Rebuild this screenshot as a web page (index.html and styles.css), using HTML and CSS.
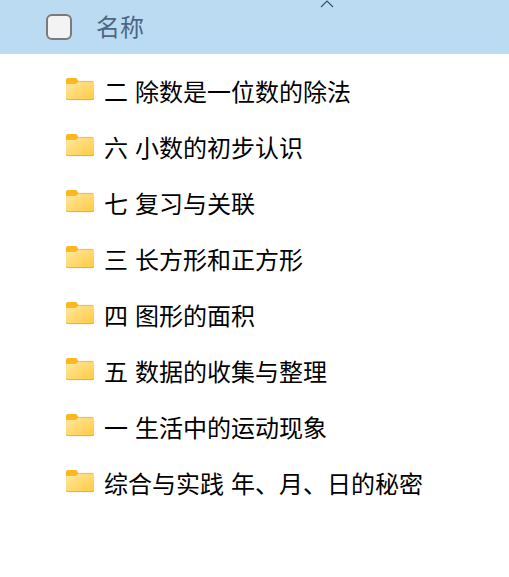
FILE: index.html
```html
<!DOCTYPE html>
<html lang="zh-CN">

<head>
    <meta charset="UTF-8">
    <meta name="viewport" content="width=device-width, initial-scale=1.0">
    <title>名称</title>
    <link rel="stylesheet" href="styles.css">
</head>

<body>
    <svg class="defs" width="0" height="0">
        <defs>
            <linearGradient id="folderFill" x1="0" y1="0" x2="1" y2="1">
                <stop offset="0" stop-color="#ffe8a4" />
                <stop offset="1" stop-color="#ffca3e" />
            </linearGradient>
            <symbol id="folder" viewBox="0 0 28 24">
                <path d="M0 2Q0 0 2 0H9.5Q10.5 0 11 .8L12.5 3V7H0Z" fill="#f9b81f" />
                <path d="M0 5.5H9.3Q10.4 5.5 11 4.7L11.7 3.8Q12.3 3 13.3 3H26.7Q28 3 28 4.3V20.7Q28 22 26.7 22H1.3Q0 22 0 20.7Z" fill="url(#folderFill)" />
                <path d="M0 5.5H9.3Q10.4 5.5 11 4.7L11.7 3.8Q12.3 3.4 13.3 3.4H27" fill="none" stroke="#efb53a" stroke-width=".8" />
                <path d="M.3 20.5Q.5 21.6 1.7 21.6H26.3Q27.5 21.6 27.7 20.5" fill="none" stroke="#dfaa35" stroke-width=".9" />
            </symbol>
        </defs>
    </svg>

    <div class="header">
        <span class="checkbox"></span>
        <span class="column-name">名称</span>
        <svg class="sort-arrow" width="14" height="8" viewBox="0 0 14 8">
            <path d="M1 7L7 1L13 7" fill="none" stroke="#3d5266" stroke-width="1.2" />
        </svg>
    </div>

    <ul class="file-list">
        <li><svg class="icon"><use href="#folder" /></svg><span class="name">二 除数是一位数的除法</span></li>
        <li><svg class="icon"><use href="#folder" /></svg><span class="name">六 小数的初步认识</span></li>
        <li><svg class="icon"><use href="#folder" /></svg><span class="name">七 复习与关联</span></li>
        <li><svg class="icon"><use href="#folder" /></svg><span class="name">三 长方形和正方形</span></li>
        <li><svg class="icon"><use href="#folder" /></svg><span class="name">四 图形的面积</span></li>
        <li><svg class="icon"><use href="#folder" /></svg><span class="name">五 数据的收集与整理</span></li>
        <li><svg class="icon"><use href="#folder" /></svg><span class="name">一 生活中的运动现象</span></li>
        <li><svg class="icon"><use href="#folder" /></svg><span class="name">综合与实践 年、月、日的秘密</span></li>
    </ul>
</body>

</html>
```
FILE: styles.css
```css
body {
    margin: 0;
    background: #fff;
    color: #000;
    font-family: "Noto Sans CJK SC", sans-serif;
    font-size: 24px;
}

.defs {
    display: block;
}

.header {
    position: relative;
    display: flex;
    align-items: center;
    height: 54px;
    padding-left: 46px;
    background: #badbf2;
    box-sizing: border-box;
}

.checkbox {
    width: 26px;
    height: 26px;
    margin-right: 24px;
    border: 2px solid #7a7a7a;
    border-radius: 6px;
    background: #f3f3f3;
    box-sizing: border-box;
}

.column-name {
    padding-bottom: 4px;
    color: #4c6785;
}

.sort-arrow {
    position: absolute;
    top: 0;
    left: 320px;
}

.file-list {
    margin: 0;
    padding: 10px 0 0 66px;
    list-style: none;
}

.file-list li {
    display: flex;
    align-items: center;
    height: 56px;
    word-spacing: 1.5px;
    white-space: nowrap;
}

.icon {
    width: 28px;
    height: 24px;
    margin: 0 10px 4px 0;
}

.name {
    padding-bottom: 4px;
}
```
